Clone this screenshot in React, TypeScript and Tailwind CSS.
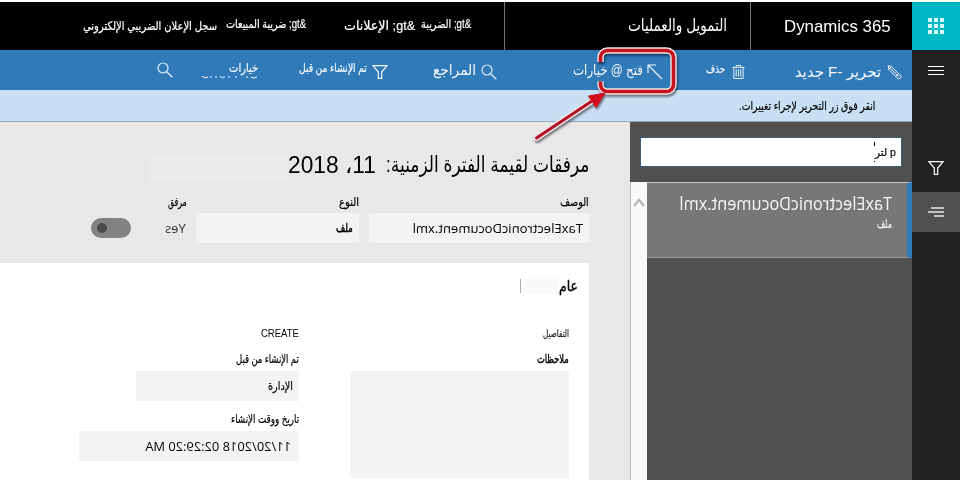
import { useLayoutEffect, useRef, useState, type ReactNode } from "react";

interface FitProps {
  className: string;
  mirrored?: boolean;
  children: ReactNode;
}

// One line of text, condensed or stretched to the width of its slot.
function Fit({ className, mirrored, children }: FitProps) {
  const slot = useRef<HTMLSpanElement>(null);
  const line = useRef<HTMLSpanElement>(null);
  const [scale, setScale] = useState(1);

  useLayoutEffect(() => {
    if (slot.current && line.current) {
      setScale(slot.current.offsetWidth / line.current.offsetWidth);
    }
  }, []);

  return (
    <span
      ref={slot}
      className={`flex shrink-0 leading-[20px] ${mirrored ? "-scale-x-100" : "[-webkit-text-stroke:0.2px]"} ${className}`}
    >
      <span
        ref={line}
        dir={mirrored ? "ltr" : "rtl"}
        className="shrink-0 origin-right whitespace-nowrap"
        style={{ transform: `scaleX(${scale})` }}
      >
        {children}
      </span>
    </span>
  );
}

function SearchIcon({ className }: { className: string }) {
  return (
    <svg viewBox="0 0 16 16" className={`size-4 shrink-0 ${className}`} fill="none" stroke="#d9ecfb">
      <circle cx="6" cy="6" r="5" strokeWidth="1.2" />
      <path d="M9.7 9.7 15.3 15.3" strokeWidth="1.3" />
    </svg>
  );
}

function FilterIcon({ className }: { className: string }) {
  return (
    <svg viewBox="0 0 16 14" className={`h-3.5 w-4 shrink-0 ${className}`} fill="none" stroke="currentColor" strokeWidth="1.2">
      <path d="M.9.7h14.2L9.7 7v6.3H6.3V7Z" />
    </svg>
  );
}

function Rail() {
  return (
    <nav className="ms-px flex h-[478px] w-12 shrink-0 flex-col bg-[#212121] text-white">
      <div className="flex h-12 items-center justify-center bg-[#00b7c3]">
        <div className="grid grid-cols-3 gap-[2px]">
          {Array.from({ length: 9 }, (_, i) => (
            <span key={i} className="size-1 bg-[#d8fafa]" />
          ))}
        </div>
      </div>
      <div className="mt-4 flex flex-col items-center gap-[3px]">
        <span className="h-px w-4 bg-white" />
        <span className="h-px w-4 bg-white" />
        <span className="h-px w-4 bg-white" />
      </div>
      <div className="mt-[86px] flex justify-center">
        <FilterIcon className="" />
      </div>
      <div className="mt-[17px] flex h-10 items-center bg-[#505050] ps-4">
        <svg viewBox="0 0 16 10" className="h-2.5 w-4" stroke="#e6e6e6" strokeWidth="1.5">
          <path d="M3 1h13M0 5h16M6 9h10" />
        </svg>
      </div>
    </nav>
  );
}

function TopBar() {
  return (
    <header className="flex h-12 items-center bg-black text-white">
      <div className="flex h-full w-[162px] items-center border-e border-[#777] ps-[21px] pt-px">
        <Fit className="w-[107px] text-[17px] [-webkit-text-stroke:0]">Dynamics 365</Fit>
      </div>
      <div className="flex h-full w-[246px] items-center border-e border-[#777] ps-[23px]">
        <Fit className="w-[99px] text-[17px] [-webkit-text-stroke:0]">التمويل والعمليات</Fit>
      </div>
      <Fit className="ms-[33px] mb-1 w-[50px] text-[12px]">&amp;gt; الضريبة</Fit>
      <Fit className="ms-[6px] w-[71px] text-[13px]">&amp;gt; الإعلانات</Fit>
      <Fit className="ms-[38px] mb-1 w-[80px] text-[12px]">&amp;gt; ضريبة المبيعات</Fit>
      <Fit className="ms-[9px] mb-px w-[134px] text-[12px]">سجل الإعلان الضريبي الإلكتروني</Fit>
    </header>
  );
}

function ActionBar() {
  return (
    <div className="flex h-10 items-center bg-[#307ab8] text-[#f3f9ff]">
      <svg viewBox="0 0 16 16" className="ms-[10px] mt-1 size-[15px] shrink-0" fill="none" stroke="currentColor">
        <path d="M1.3.8 4.7 1.6 14.2 11.1a2 2 0 0 1-3 3L1.8 4.6ZM1.8 4.6 4.7 1.6M9.3 12.2l3-3M3.4 3.2 12.6 12.4" strokeWidth="1" />
      </svg>
      <Fit className="ms-[6px] mt-1 w-[86px] text-[15px] [-webkit-text-stroke:0]">تحرير -F جديد</Fit>
      <svg viewBox="0 0 14 16" className="ms-[50px] mt-1 h-4 w-[13px] shrink-0" fill="none" stroke="currentColor">
        <path d="M.5 3h13M4.5 3V1h5v2M2 3v12h10V3M4.5 5v8M7 5v8M9.5 5v8" />
      </svg>
      <Fit className="ms-[7px] mb-[3px] w-[19px] text-[12px]">حذف</Fit>
      <svg viewBox="0 0 16 16" className="ms-[43px] mt-1 size-4 shrink-0" fill="none" stroke="currentColor" strokeWidth="1.1">
        <path d="M1 9V1h8M1 1l14 14" />
      </svg>
      <Fit className="ms-[4px] w-[70px] text-[14px] [-webkit-text-stroke:0]">فتح @ خيارات</Fit>
      <SearchIcon className="ms-[76px] mt-1" />
      <Fit className="ms-[5px] w-[43px] text-[15px] [-webkit-text-stroke:0]">المراجع</Fit>
      <FilterIcon className="ms-[45px] mt-[3px]" />
      <Fit className="ms-[5px] mb-1 w-[68px] text-[12px]">تم الإنشاء من قبل</Fit>
      <div className="ms-[41px] mb-1 flex w-[57px] shrink-0 flex-col">
        <Fit className="w-[29px] text-[12px]">خيارات</Fit>
        <svg viewBox="0 0 57 3" className="-mt-[2px] h-[3px] w-[57px]" fill="none" stroke="currentColor">
          <path d="M1 0q3 3 6 1M9 1h2M14 1h2M19 0q2 3 5 1M27 1h2M34 1h2M45 1h2M50 1q3 2 6 0" />
        </svg>
      </div>
      <SearchIcon className="ms-[28px]" />
    </div>
  );
}

function Notice() {
  return (
    <div className="flex h-8 items-center border-b border-[#8fa9b8] bg-[#c9dff3] ps-[37px] text-black">
      <Fit className="w-[136px] text-[11.5px]">انقر فوق زر التحرير لإجراء تغييرات.</Fit>
    </div>
  );
}

function DocumentList() {
  return (
    <aside className="flex w-[282px] shrink-0 flex-col bg-[#505050]">
      <div className="flex h-[60px] pt-[15px] ps-[10px]">
        <div className="flex h-[30px] w-[262px] items-center border border-[#3d6079] bg-white ps-[5px]">
          <Fit className="w-[21px] text-[11px] text-black">p لتر</Fit>
          <span className="flex h-5 w-px flex-col justify-between">
            <span className="h-1 w-px bg-black" />
            <span className="h-px w-px bg-black" />
          </span>
        </div>
      </div>
      <div className="flex flex-1">
        <div className="flex h-[76px] w-[265px] flex-col border-t border-b border-s-[5px] border-t-[#c4c4c4] border-b-[#999] border-s-[#307ab8] bg-[#777] ps-[15px] pt-[10px] text-[#f5f5f5]">
          <Fit mirrored className="w-[213px] font-['Open_Sans',sans-serif] text-[18px]">
            TaxElectronicDocument.xml
          </Fit>
          <Fit className="mt-px w-[15px] text-[12px]">ملف</Fit>
        </div>
        <div className="flex w-[17px] justify-center border-e border-[#bbb] bg-[#fafafa] pt-[16px]">
          <svg viewBox="0 0 12 9" className="h-[9px] w-3" fill="none" stroke="#bcbcbc" strokeWidth="2.5">
            <path d="M1 8 6 2l5 6" />
          </svg>
        </div>
      </div>
    </aside>
  );
}

function HeaderFields() {
  return (
    <div className="flex">
      <div className="w-[220px]">
        <Fit className="w-[29px] text-[12px]">الوصف</Fit>
        <div className="mt-px flex h-[30px] items-center bg-[#f3f3f3] ps-[6px]">
          <Fit mirrored className="w-[170px] font-['Open_Sans',sans-serif] text-[13px]">
            TaxElectronicDocument.xml
          </Fit>
        </div>
      </div>
      <div className="ms-[10px] w-[163px]">
        <Fit className="w-[20px] text-[12px]">النوع</Fit>
        <div className="mt-px flex h-[30px] items-center bg-[#f3f3f3] ps-[6px]">
          <Fit className="w-[17px] text-[12px] [-webkit-text-stroke:0.5px]">ملف</Fit>
        </div>
      </div>
      <div className="ms-[9px]">
        <Fit className="w-[19px] text-[12px]">مرفق</Fit>
        <div className="mt-px flex h-[30px] items-center">
          <Fit mirrored className="ms-px w-[21px] font-['Open_Sans',sans-serif] text-[13px] text-[#333]">
            Yes
          </Fit>
          <span className="ms-[34px] flex h-5 w-10 items-center justify-end rounded-full bg-[#828282] pe-[6px]">
            <span className="size-2.5 rounded-full bg-[#4a4a4a]" />
          </span>
        </div>
      </div>
    </div>
  );
}

function GeneralCard() {
  return (
    <section className="mt-5 flex-1 bg-white pt-[13px]">
      <div className="flex h-5 items-center ps-[11px]">
        <Fit className="w-[19px] text-[15px] [-webkit-text-stroke:0.4px]">عام</Fit>
        <span className="h-[15px] w-[36px] bg-[#f9f9f9]" />
        <span className="ms-[2px] h-[14px] w-px bg-[#aaa]" />
      </div>
      <div className="mt-[28px] flex">
        <div className="ms-5 w-[219px]">
          <Fit className="w-[26px] text-[10px] text-[#222]">التفاصيل</Fit>
          <Fit className="mt-[5px] w-[32px] text-[12px] [-webkit-text-stroke:0.4px]">ملاحظات</Fit>
          <div className="mt-[2px] h-[107px] bg-[#f3f3f3]" />
        </div>
        <div className="ms-[51px] w-[220px]">
          <Fit className="w-[38px] text-[10px] [-webkit-text-stroke:0]">CREATE</Fit>
          <Fit className="mt-[5px] w-[63px] text-[12px]">تم الإنشاء من قبل</Fit>
          <div className="mt-[2px] flex h-[30px] w-[163px] items-center bg-[#f3f3f3] ps-[6px]">
            <Fit className="w-[25px] text-[12px]">الإدارة</Fit>
          </div>
          <Fit className="mt-[8px] w-[68px] text-[12px]">تاريخ ووقت الإنشاء</Fit>
          <div className="mt-[2px] flex h-[30px] items-center bg-[#f3f3f3] ps-[8px]">
            <Fit mirrored className="w-[146px] font-['Open_Sans',sans-serif] text-[13.5px]">
              11/20/2018 02:29:20 MA
            </Fit>
          </div>
        </div>
      </div>
    </section>
  );
}

// The frame stays open on its left side where the button label crosses it.
function Callout() {
  const frame = "M70.5 17V12.5a7 7 0 0 1 7-7h59a7 7 0 0 1 7 7v27a7 7 0 0 1-7 7h-59a7 7 0 0 1-7-7V36.5";

  return (
    <svg
      viewBox="0 0 150 100"
      className="pointer-events-none absolute top-[45px] left-[530px] h-[100px] w-[150px] drop-shadow-[1px_2px_1px_rgba(0,0,0,0.5)]"
      fill="none"
    >
      <path d={frame} stroke="#f5e4e6" strokeWidth="6.5" />
      <path d={frame} stroke="#c4121f" strokeWidth="3.6" />
      <path d="M6.5 93 62 56" stroke="#f5e4e6" strokeWidth="6" strokeLinecap="round" />
      <path d="M6.5 93 62 56" stroke="#b01226" strokeWidth="3" strokeLinecap="round" />
      <path d="M75 48 58.5 51 66 62.5Z" fill="#d4101c" stroke="#d4101c" />
    </svg>
  );
}

export default function App() {
  return (
    <div
      dir="rtl"
      className="relative flex h-[480px] w-[961px] overflow-hidden bg-white pt-[2px] font-['Liberation_Sans','DejaVu_Sans',sans-serif] text-black"
    >
      <Rail />
      <div className="flex w-[912px] shrink-0 flex-col">
        <TopBar />
        <ActionBar />
        <Notice />
        <div className="flex flex-1">
          <DocumentList />
          <main className="flex flex-1 flex-col bg-[#e8e8e8] ps-[41px] pt-[33px]">
            <h1 className="flex">
              <Fit className="w-[203px] text-[22px] [-webkit-text-stroke:0]">مرفقات لقيمة الفترة الزمنية:</Fit>
              <Fit className="ms-[10px] w-[88px] text-[23px] [-webkit-text-stroke:0]">11، 2018</Fit>
              <span className="h-[27px] w-[139px] bg-[#ebebeb]" />
            </h1>
            <div className="mt-[10px] flex flex-1 flex-col">
              <HeaderFields />
              <GeneralCard />
            </div>
          </main>
        </div>
      </div>
      <Callout />
    </div>
  );
}
